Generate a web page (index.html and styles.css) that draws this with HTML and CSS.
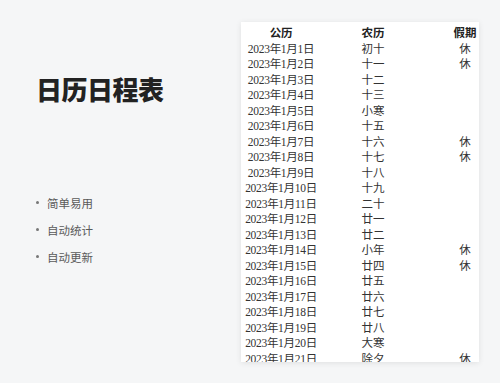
FILE: index.html
```html
<!DOCTYPE html>
<html lang="zh">
<head>
<meta charset="utf-8">
<link rel="stylesheet" href="styles.css">
</head>
<body>
<main class="page">
  <section class="intro">
    <h1 class="title">日历日程表</h1>
    <ul class="features">
      <li>简单易用</li>
      <li>自动统计</li>
      <li>自动更新</li>
    </ul>
  </section>
  <section class="card">
    <div class="row head"><span class="c1">公历</span><span class="c2">农历</span><span class="c3">假期</span></div>
    <div class="row"><span class="c1">2023年1月1日</span><span class="c2">初十</span><span class="c3">休</span></div>
    <div class="row"><span class="c1">2023年1月2日</span><span class="c2">十一</span><span class="c3">休</span></div>
    <div class="row"><span class="c1">2023年1月3日</span><span class="c2">十二</span><span class="c3"></span></div>
    <div class="row"><span class="c1">2023年1月4日</span><span class="c2">十三</span><span class="c3"></span></div>
    <div class="row"><span class="c1">2023年1月5日</span><span class="c2">小寒</span><span class="c3"></span></div>
    <div class="row"><span class="c1">2023年1月6日</span><span class="c2">十五</span><span class="c3"></span></div>
    <div class="row"><span class="c1">2023年1月7日</span><span class="c2">十六</span><span class="c3">休</span></div>
    <div class="row"><span class="c1">2023年1月8日</span><span class="c2">十七</span><span class="c3">休</span></div>
    <div class="row"><span class="c1">2023年1月9日</span><span class="c2">十八</span><span class="c3"></span></div>
    <div class="row"><span class="c1">2023年1月10日</span><span class="c2">十九</span><span class="c3"></span></div>
    <div class="row"><span class="c1">2023年1月11日</span><span class="c2">二十</span><span class="c3"></span></div>
    <div class="row"><span class="c1">2023年1月12日</span><span class="c2">廿一</span><span class="c3"></span></div>
    <div class="row"><span class="c1">2023年1月13日</span><span class="c2">廿二</span><span class="c3"></span></div>
    <div class="row"><span class="c1">2023年1月14日</span><span class="c2">小年</span><span class="c3">休</span></div>
    <div class="row"><span class="c1">2023年1月15日</span><span class="c2">廿四</span><span class="c3">休</span></div>
    <div class="row"><span class="c1">2023年1月16日</span><span class="c2">廿五</span><span class="c3"></span></div>
    <div class="row"><span class="c1">2023年1月17日</span><span class="c2">廿六</span><span class="c3"></span></div>
    <div class="row"><span class="c1">2023年1月18日</span><span class="c2">廿七</span><span class="c3"></span></div>
    <div class="row"><span class="c1">2023年1月19日</span><span class="c2">廿八</span><span class="c3"></span></div>
    <div class="row"><span class="c1">2023年1月20日</span><span class="c2">大寒</span><span class="c3"></span></div>
    <div class="row"><span class="c1">2023年1月21日</span><span class="c2">除夕</span><span class="c3">休</span></div>
  </section>
</main>
</body>
</html>
```

FILE: styles.css
```css
html, body {
  margin: 0;
  padding: 0;
  background: #f5f6f7;
}
.page {
  width: 500px;
  height: 383px;
  display: flex;
  overflow: hidden;
}
.intro {
  width: 241px;
  padding-left: 36px;
  box-sizing: border-box;
  padding-top: 76px;
  flex: none;
}
.title {
  margin: 0;
  font-family: "Noto Sans CJK SC", sans-serif;
  font-weight: 900;
  font-size: 26px;
  line-height: 26px;
  color: #222222;
  letter-spacing: -0.5px;
}
.features {
  list-style: none;
  margin: 87px 0 0 0;
  padding: 0;
}
.features li {
  display: flex;
  align-items: center;
  height: 27px;
  font-family: "Noto Sans CJK SC", sans-serif;
  font-size: 11.5px;
  color: #5a5a5a;
}
.features li::before {
  content: "";
  width: 3px;
  height: 3px;
  border-radius: 50%;
  background: #777;
  margin-right: 8px;
}
.card {
  flex: none;
  width: 238px;
  height: 340px;
  margin-top: 22px;
  background: #ffffff;
  box-shadow: 0 1px 6px rgba(0, 0, 0, 0.09);
  box-sizing: border-box;
  padding-top: 4px;
  overflow: hidden;
}
.row {
  display: grid;
  grid-template-columns: 80px 104px 1fr;
  height: 15.5px;
  line-height: 15.5px;
  font-family: "Liberation Serif", "Noto Sans CJK SC", serif;
  font-size: 11.5px;
  color: #333333;
  white-space: nowrap;
}
.row span {
  text-align: center;
}
.row .c1 {
  letter-spacing: -0.3px;
}
.row .c3 {
  padding-left: 26px;
}
.head {
  font-weight: 700;
  color: #222222;
}
```
